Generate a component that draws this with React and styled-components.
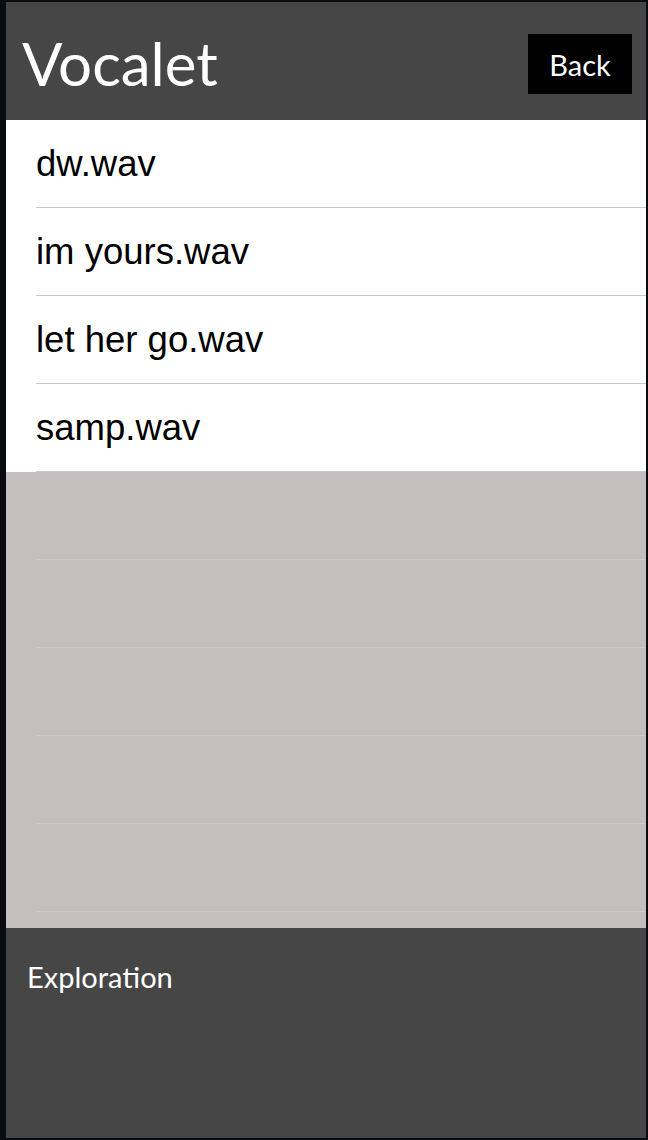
import React from 'react';
import styled, { createGlobalStyle } from 'styled-components';

const GlobalStyle = createGlobalStyle`
  html, body {
    margin: 0;
    padding: 0;
    background: #080c10;
  }
  #root {
    padding: 2px 2px 2px 6px;
  }
`;

const Screen = styled.div`
  display: flex;
  flex-direction: column;
  height: 1136px;
  background: #c4bfbf;
  overflow: hidden;
`;

const NavBar = styled.header`
  display: flex;
  align-items: center;
  justify-content: space-between;
  height: 118px;
  padding: 0 14px 0 16px;
  background: #464646;
  box-sizing: border-box;
`;

const Title = styled.h1`
  margin: 0;
  padding-top: 4px;
  font-family: 'Lato', 'DejaVu Sans', sans-serif;
  font-weight: 400;
  font-size: 60px;
  color: #fff;
`;

const BackButton = styled.button`
  width: 104px;
  height: 60px;
  margin-top: 6px;
  padding: 0;
  border: none;
  background: #000;
  color: #fff;
  font-family: 'Lato', 'DejaVu Sans', sans-serif;
  font-size: 29px;
  cursor: pointer;
`;

const Table = styled.ul`
  flex: 1;
  margin: 0;
  padding: 0;
  list-style: none;
  overflow: hidden;
`;

const Row = styled.li`
  height: 88px;
  padding-left: 30px;
  background: ${(p) => (p.empty ? 'transparent' : '#fff')};
  box-sizing: border-box;
`;

const Cell = styled.div`
  display: flex;
  align-items: center;
  height: 88px;
  border-bottom: 1px solid ${(p) => (p.empty ? '#cfcaca' : '#c8c8c8')};
  box-sizing: border-box;
  font-family: 'Liberation Sans', Arial, sans-serif;
  font-size: 36.5px;
  color: #000;
`;

const Footer = styled.footer`
  height: 210px;
  padding: 31px 21px 0;
  background: #464646;
  box-sizing: border-box;
`;

const FooterLabel = styled.span`
  font-family: 'Lato', 'DejaVu Sans', sans-serif;
  font-size: 29px;
  color: #fff;
`;

const files = ['dw.wav', 'im yours.wav', 'let her go.wav', 'samp.wav'];
const emptyRows = 5;

const App = () => {
  return (
    <>
      <GlobalStyle />
      <Screen>
        <NavBar>
          <Title>Vocalet</Title>
          <BackButton>Back</BackButton>
        </NavBar>

        <Table>
          {files.map((name) => (
            <Row key={name}>
              <Cell>{name}</Cell>
            </Row>
          ))}
          {Array.from({ length: emptyRows }).map((_, idx) => (
            <Row empty key={`empty-${idx}`}>
              <Cell empty />
            </Row>
          ))}
        </Table>

        <Footer>
          <FooterLabel>Exploration</FooterLabel>
        </Footer>
      </Screen>
    </>
  );
};

export default App;
